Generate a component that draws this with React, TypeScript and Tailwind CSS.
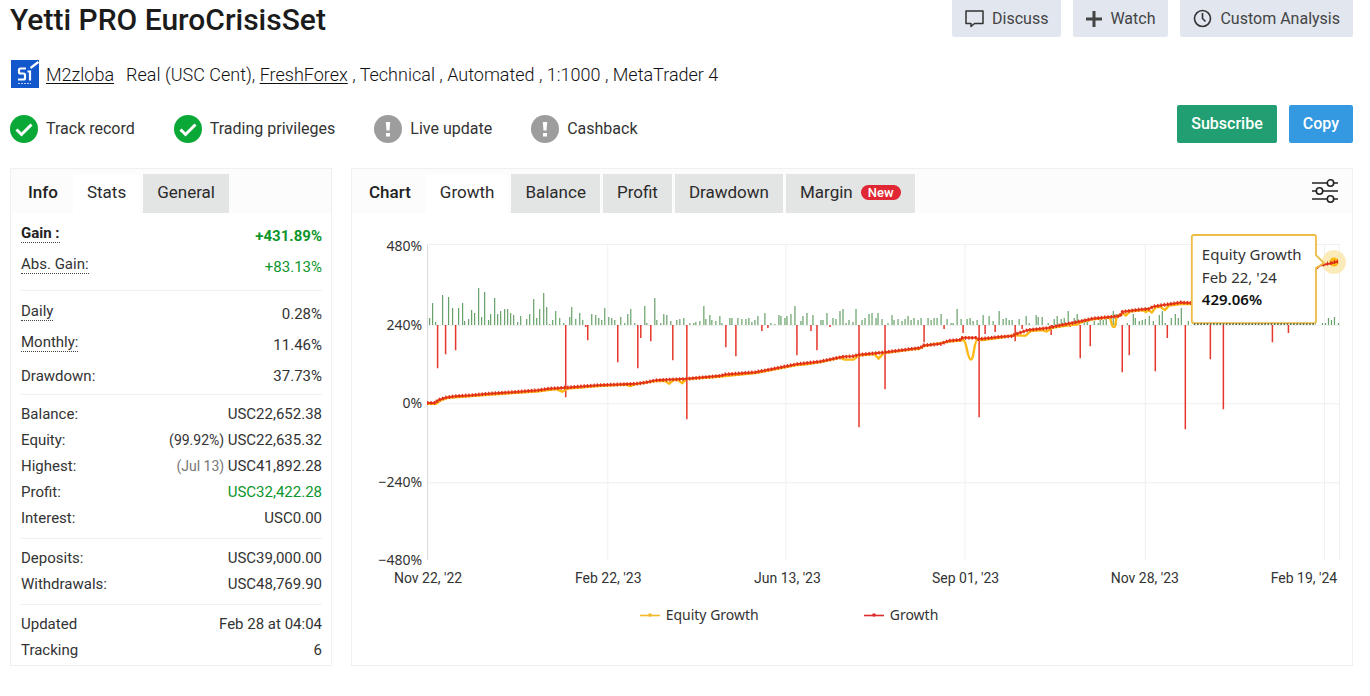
import React from "react";

const BASE = 325;

// [x, height] of the positive change bars
const gains: number[][] = [
  [429, 7], [432, 22], [435, 3], [442, 30], [448, 28], [452, 17], [458, 17], [462, 22], [464, 4], [468, 6],
  [471, 15], [474, 12], [478, 37], [481, 8], [484, 33], [488, 5], [490, 11], [494, 27], [497, 11], [500, 14],
  [504, 16], [507, 16], [510, 12], [513, 10], [517, 3], [520, 9], [526, 6], [529, 11], [533, 26], [536, 7],
  [539, 16], [543, 32], [546, 18], [549, 1], [552, 5], [555, 14], [559, 7], [563, 2], [569, 8], [571, 18],
  [575, 6], [579, 12], [582, 5], [591, 11], [595, 10], [598, 7], [601, 5], [604, 17], [608, 8], [611, 7],
  [614, 5], [620, 8], [624, 2], [627, 11], [630, 16], [634, 2], [644, 19], [646, 2], [654, 27], [656, 5],
  [660, 2], [663, 11], [666, 10], [670, 4], [676, 5], [679, 6], [683, 7], [689, 2], [693, 2], [695, 3],
  [699, 4], [703, 19], [705, 6], [709, 10], [711, 5], [715, 4], [719, 9], [721, 2], [729, 7], [731, 7],
  [737, 7], [741, 6], [745, 6], [748, 7], [751, 3], [754, 5], [757, 9], [764, 12], [770, 2], [774, 1],
  [778, 10], [780, 9], [784, 7], [786, 9], [790, 11], [794, 19], [800, 4], [802, 9], [806, 12], [812, 10],
  [820, 5], [822, 5], [826, 12], [832, 7], [835, 6], [839, 14], [842, 16], [845, 2], [848, 5], [852, 3],
  [855, 16], [861, 5], [864, 7], [868, 11], [871, 12], [875, 7], [877, 12], [881, 6], [887, 2], [891, 10],
  [893, 5], [897, 6], [901, 4], [904, 6], [907, 9], [910, 5], [913, 7], [917, 5], [920, 7], [927, 7],
  [930, 5], [933, 7], [936, 7], [940, 11], [946, 6], [950, 2], [952, 2], [956, 16], [960, 6], [966, 6],
  [969, 7], [972, 4], [976, 5], [982, 10], [988, 9], [992, 4], [998, 14], [1002, 6], [1005, 7], [1008, 5],
  [1011, 5], [1018, 6], [1025, 9], [1028, 2], [1035, 10], [1037, 8], [1041, 8], [1047, 2], [1053, 6], [1056, 9],
  [1060, 6], [1063, 7], [1067, 14], [1070, 2], [1073, 7], [1076, 11], [1083, 6], [1086, 4], [1093, 4], [1097, 2],
  [1099, 6], [1102, 5], [1105, 7], [1112, 14], [1115, 11], [1126, 2], [1132, 11], [1134, 7], [1138, 4], [1141, 5],
  [1144, 6], [1148, 9], [1152, 4], [1158, 10], [1161, 14], [1164, 2], [1170, 7], [1174, 11], [1177, 7], [1180, 17],
  [1187, 4], [1321, 2], [1324, 2], [1327, 7], [1330, 5], [1333, 8], [1337, 2],
];

// [x, depth] of the negative change bars
const losses: number[][] = [
  [437, 43], [445, 29], [455, 25], [565, 72], [585, 2], [587, 15], [617, 37], [637, 43], [640, 13], [650, 16],
  [672, 35], [686, 94], [725, 22], [735, 31], [761, 6], [767, 3], [796, 30], [810, 6], [816, 25], [829, 2],
  [858, 102], [884, 64], [923, 17], [943, 4], [962, 8], [978, 92], [984, 9], [994, 7], [1014, 16], [1021, 4],
  [1050, 10], [1069, 2], [1079, 33], [1089, 21], [1121, 47], [1128, 30], [1154, 46], [1166, 13], [1184, 104],
  [1209, 34], [1222, 84], [1271, 17], [1287, 8],
];

const growth =
  "M427 402.7H435L438 400L445 397.5L455 396L472 395L488 393.5L512 392L538 390L548 388.5L565 387.5L578 386.5L598 385L635 383.7L645 382.3L655 380.2L686 378.7L720 375.7L725 374.3L755 372L773 368.7L796 364L820 361.3L842 356.7L853 356L858 354.7L885 352L920 347.7L923 345.3L940 343.7L948 340.7L960 339.7L962 337.7H975L978 339L1000 336.7L1012 336L1015 334L1027 330L1047 328L1057 325.7L1079 321.3L1093 318.3L1119 316L1122 311.7L1137 309.7L1148 308.7L1153 306.3L1180 302.3L1192 303";

const equity =
  "M427 403.5H436L440 400.5L448 397.5L488 394.5L540 391L556 389L562 391.5L567 388.5L598 386L625 384.5L630 386L635 384L655 381L665 381L669 383.5L673 380L678 380L682 383L686 379L720 376.5L755 373L773 369.5L796 365L804 364.5L820 362L840 357.5L844 359.5H853L858 355.5L874 354L878 358.5L883 353L914 349L918 349L923 346L948 341.5L960 340.5L963 340C966 341 967 359.3 970 359.3C974 359.3 973 340 977 339.5L982 340L1000 337.5L1014 335L1020 335.5H1025L1030 331L1042 330L1046 331.5L1052 327.5L1070 325L1076 324.5L1082 321.5L1093 319L1108 317.5C1111 317.5 1110 327 1113 327C1116 327 1114 317 1117 316.5L1122 313L1125 315.5L1129 311.5L1142 310L1145 312L1148 310L1151 312.5L1155 307L1160 307L1164 310L1168 305.5L1180 304L1192 304";

const yLabels = [
  { y: 245, label: "480%" },
  { y: 324, label: "240%" },
  { y: 402, label: "0%" },
  { y: 481, label: "−240%" },
  { y: 559, label: "−480%" },
];

const xLabels = [
  { x: 428, label: "Nov 22, '22" },
  { x: 608, label: "Feb 22, '23" },
  { x: 787, label: "Jun 13, '23" },
  { x: 965, label: "Sep 01, '23" },
  { x: 1144, label: "Nov 28, '23" },
  { x: 1303, label: "Feb 19, '24" },
];

function GrowthChart() {
  return (
    <svg viewBox="352 213 999 378" className="block w-full" role="img" aria-label="Growth">
      <g stroke="#f0f0f0" fill="none">
        <path d="M427 244.500H1339M427 325.500H1339M427 403.500H1339M427 482.500H1339" />
        <path d="M607.500 245V560M785.500 245V560M964.500 245V560M1144.500 245V560M1323.500 245V560M1338.500 245V560" />
        <path d="M427.500 245V560" stroke="#d9d9d9" />
      </g>
      <path d={gains.map(([x, h]) => `M${x + 0.5} ${BASE}v${-h}`).join("")} stroke="#67a169" strokeWidth="1.200" fill="none" />
      <path d={losses.map(([x, h]) => `M${x + 0.5} ${BASE}v${h}`).join("")} stroke="#e5372b" strokeWidth="1.500" fill="none" />
      <path d={equity} stroke="#fdb913" strokeWidth="2.400" fill="none" strokeLinejoin="round" />
      <path d={growth} stroke="#e83a17" strokeWidth="2" fill="none" strokeLinejoin="round" />
      <path d={growth} stroke="#de2e16" strokeWidth="3.800" strokeDasharray="1.300 2" fill="none" />
      <g className="font-['Noto_Sans',sans-serif] text-[14px]" fill="#333" textAnchor="end">
        {yLabels.map((t) => (
          <text key={t.label} x="422" y={t.y + 6}>{t.label}</text>
        ))}
      </g>
      <g className="font-[Roboto,sans-serif] text-[14px]" fill="#333" textAnchor="middle">
        {xLabels.map((t) => (
          <text key={t.label} x={t.x} y="583">{t.label}</text>
        ))}
      </g>
      <circle cx="1333" cy="262" r="12" fill="#fbe8ae" fillOpacity="0.850" />
      <circle cx="1333" cy="262" r="4.500" fill="#fdb913" />
      <path d="M1315 269L1319 265.500L1329 263.500L1337 261.500" stroke="#e0301c" strokeWidth="2" fill="none" />
      <path d="M1322.500 262.500v4M1326.500 261.500v4M1330 261v4M1333.500 260v4M1336.500 259.500v4" stroke="#d92b1a" />
      <path
        d="M1193 235H1313Q1315 235 1315 237V255L1323 263L1315 268V321Q1315 323 1313 323H1193Q1191 323 1191 321V237Q1191 235 1193 235Z"
        fill="#fff"
        stroke="#eebc45"
        strokeWidth="1.800"
      />
      <path d="M1193 324H1315" stroke="#4d6b4e" strokeWidth="1.600" strokeDasharray="1.600 1.600" />
      <g className="font-['Noto_Sans',sans-serif] text-[15px]" fill="#333">
        <text x="1201" y="260">Equity Growth</text>
        <text x="1201" y="283">Feb 22, '24</text>
        <text x="1201" y="305" fontWeight="600" fill="#111">429.06%</text>
      </g>
    </svg>
  );
}

function Legend({ label, line }: { label: string; line: string }) {
  return (
    <li className="flex items-center gap-1.5">
      <svg width="20" height="6" viewBox="0 0 20 6" className={line} aria-hidden="true">
        <path d="M0 3.500H20" stroke="currentColor" strokeWidth="1.600" />
        <circle cx="10" cy="3" r="1.800" fill="currentColor" />
      </svg>
      {label}
    </li>
  );
}

function Tab({ label, active, badge }: { label: string; active?: boolean; badge?: string }) {
  return (
    <button
      type="button"
      role="tab"
      aria-selected={!!active}
      className={`flex h-[39px] items-center gap-2 px-[14px] pb-[2px] text-[17px] text-[#2b2b2b] ${active ? "bg-white" : "bg-[#e3e4e4]"}`}
    >
      {label}
      {badge && (
        <span className="flex h-[15px] items-center rounded-full bg-[#e02733] px-[7px] text-[13px] font-medium text-white">
          {badge}
        </span>
      )}
    </button>
  );
}

type Row = { label: string; value: string; note?: string; hint?: boolean; bold?: boolean; green?: boolean; faint?: boolean };

const topGroups: Row[][] = [
  [
    { label: "Gain :", value: "+431.89%", hint: true, bold: true, green: true },
    { label: "Abs. Gain:", value: "+83.13%", hint: true, green: true },
  ],
  [
    { label: "Daily", value: "0.28%", hint: true },
    { label: "Monthly:", value: "11.46%", hint: true },
    { label: "Drawdown:", value: "37.73%" },
  ],
];

const bottomGroups: Row[][] = [
  [
    { label: "Balance:", value: "USC22,652.38" },
    { label: "Equity:", note: "(99.92%)", value: "USC22,635.32" },
    { label: "Highest:", note: "(Jul 13)", value: "USC41,892.28", faint: true },
    { label: "Profit:", value: "USC32,422.28", green: true },
    { label: "Interest:", value: "USC0.00" },
  ],
  [
    { label: "Deposits:", value: "USC39,000.00" },
    { label: "Withdrawals:", value: "USC48,769.90" },
  ],
  [
    { label: "Updated", value: "Feb 28 at 04:04" },
    { label: "Tracking", value: "6" },
  ],
];

function StatRow({ row, tall }: { row: Row; tall?: boolean }) {
  return (
    <div className={`flex items-center justify-between ${tall ? "h-[31px]" : "h-[26px]"}`}>
      <dt
        className={`leading-[18px] ${row.hint ? "mb-[5px] border-b border-dotted border-[#444]" : ""} ${row.bold ? "font-bold text-[#222]" : ""}`}
      >
        {row.label}
      </dt>
      <dd className={`leading-[18px] ${row.bold ? "font-bold" : ""} ${row.green ? "text-[#0c962c]" : ""}`}>
        {row.note && <span className={row.faint ? "text-[14px] text-[#777]" : "text-[14px]"}>{row.note} </span>}
        {row.value}
      </dd>
    </div>
  );
}

function Status({ label, ok }: { label: string; ok?: boolean }) {
  return (
    <li className="flex items-center gap-2">
      <svg width="28" height="28" viewBox="0 0 28 28" aria-hidden="true">
        <circle cx="14" cy="14" r="14" fill={ok ? "#0aa836" : "#9d9d9d"} />
        {ok ? (
          <path d="M6.500 14.500L11.500 19.500L21.500 9.500" stroke="#fff" strokeWidth="3" fill="none" />
        ) : (
          <path d="M11.800 7h4.400l-.7 8.500h-3zM12 18h4v3.500h-4z" fill="#fff" />
        )}
      </svg>
      {label}
    </li>
  );
}

const toolButton = "flex h-[37px] items-center gap-2 rounded-b-[2px] bg-[#e1e6ef] px-[13px] text-[16px] text-[#444]";

export default function App() {
  return (
    <main className="min-h-screen bg-white pr-[17px] pl-[10px] font-[Roboto,sans-serif] text-[#333]">
      <header className="flex items-start justify-between">
        <h1 className="pt-px text-[30px] leading-[37px] font-medium text-[#1b1b1b]">Yetti PRO EuroCrisisSet</h1>
        <div className="flex gap-3">
          <button type="button" className={toolButton}>
            <svg width="19" height="20" viewBox="0 0 19 20" fill="none" stroke="#333" strokeWidth="1.500" aria-hidden="true">
              <path d="M1 2H18V14.500H9.500L6 17.500V14.500H1Z" strokeLinejoin="round" />
            </svg>
            Discuss
          </button>
          <button type="button" className={toolButton}>
            <svg width="16" height="16" viewBox="0 0 16 16" stroke="#444" strokeWidth="3" aria-hidden="true">
              <path d="M8 0V16M0 8H16" />
            </svg>
            Watch
          </button>
          <button type="button" className={toolButton}>
            <svg width="19" height="19" viewBox="0 0 19 19" fill="none" stroke="#333" strokeWidth="1.600" aria-hidden="true">
              <circle cx="9.500" cy="9.500" r="8" />
              <path d="M9.500 4V9.500L12.500 12.500" />
            </svg>
            Custom Analysis
          </button>
        </div>
      </header>

      <div className="mt-5 flex h-8 items-center text-[18px] font-light text-[#111]">
        <svg width="29" height="28" viewBox="0 0 29 28" aria-hidden="true" className="mr-[7px]">
          <path d="M1 0H29V28H1Z" fill="#1257cc" />
          <g fill="none" stroke="#fff" strokeWidth="2.200">
            <path d="M16 8.500H10.500Q9 8.500 9 10V12Q9 13.500 10.500 13.500H13.500Q15 13.500 15 15V18Q15 19.500 13.500 19.500H8" />
            <path d="M17.500 11.500H20V20.600" />
            <path d="M20.500 8L28.500 2" />
          </g>
          <path d="M8 23.500H21" stroke="#b9d0f5" strokeDasharray="2 1" />
        </svg>
        <a href="#user" className="underline decoration-1 underline-offset-2">M2zloba</a>
        <p className="ml-3">
          Real (USC Cent), <a href="#broker" className="underline decoration-1 underline-offset-2">FreshForex</a> , Technical , Automated , 1:1000 , MetaTrader 4
        </p>
      </div>

      <div className="mt-[15px] flex items-start justify-between">
        <ul className="flex gap-[39px] pt-[10px] text-[16px]">
          <Status label="Track record" ok />
          <Status label="Trading privileges" ok />
          <Status label="Live update" />
          <Status label="Cashback" />
        </ul>
        <div className="flex gap-3 text-[16px] font-medium text-white">
          <button type="button" className="h-[38px] rounded-[2px] bg-[#219f72] px-[14px]">Subscribe</button>
          <button type="button" className="h-[38px] rounded-[2px] bg-[#3499e1] px-[14px]">Copy</button>
        </div>
      </div>

      <div className="mt-[25px] grid grid-cols-[322px_1fr] gap-[19px]">
        <section className="border border-[#f0f0f0]">
          <div className="flex h-[44px] items-end gap-[3px] bg-[#fcfcfc]" role="tablist">
            <h2 className="mr-3 ml-[17px] flex h-[39px] items-center pb-[2px] text-[17px] font-medium text-[#222]">Info</h2>
            <Tab label="Stats" active />
            <Tab label="General" />
          </div>
          <dl className="pr-[9px] pl-[10px] text-[15px]">
            {topGroups.map((g, i) => (
              <div key={i} className={i === 0 ? "border-b border-[#f0f0f0] pt-[7px] pb-[8px]" : "border-b border-[#f0f0f0] pt-[7px] pb-[3px]"}>
                {g.map((r) => <StatRow key={r.label} row={r} tall />)}
              </div>
            ))}
            {bottomGroups.map((g, i) => (
              <div key={i} className="border-b border-[#f0f0f0] pt-[6px] pb-[7px] last:border-0 last:pb-[2px]">
                {g.map((r) => <StatRow key={r.label} row={r} />)}
              </div>
            ))}
          </dl>
        </section>

        <section className="border border-[#f0f0f0]">
          <div className="flex h-[44px] items-end gap-[3px] bg-[#fcfcfc]" role="tablist">
            <h2 className="mr-3 ml-[17px] flex h-[39px] items-center pb-[2px] text-[17px] font-medium text-[#222]">Chart</h2>
            <Tab label="Growth" active />
            <Tab label="Balance" />
            <Tab label="Profit" />
            <Tab label="Drawdown" />
            <Tab label="Margin" badge="New" />
            <button type="button" aria-label="Chart settings" className="mr-[14px] mb-[10px] ml-auto">
              <svg width="26" height="24" viewBox="0 0 26 24" fill="#fff" stroke="#222" strokeWidth="1.600" aria-hidden="true">
                <path d="M0 4H26M0 12H26M0 20H26" />
                <circle cx="18.500" cy="4" r="3.200" />
                <circle cx="7.500" cy="12" r="3.200" />
                <circle cx="18.500" cy="20" r="3.200" />
              </svg>
            </button>
          </div>
          <GrowthChart />
          <ul className="flex justify-center gap-[105px] pt-[13px] pr-[126px] font-['Noto_Sans',sans-serif] text-[14px] leading-[22px]">
            <Legend label="Equity Growth" line="text-[#f0b928]" />
            <Legend label="Growth" line="text-[#dd2c2c]" />
          </ul>
        </section>
      </div>
    </main>
  );
}
